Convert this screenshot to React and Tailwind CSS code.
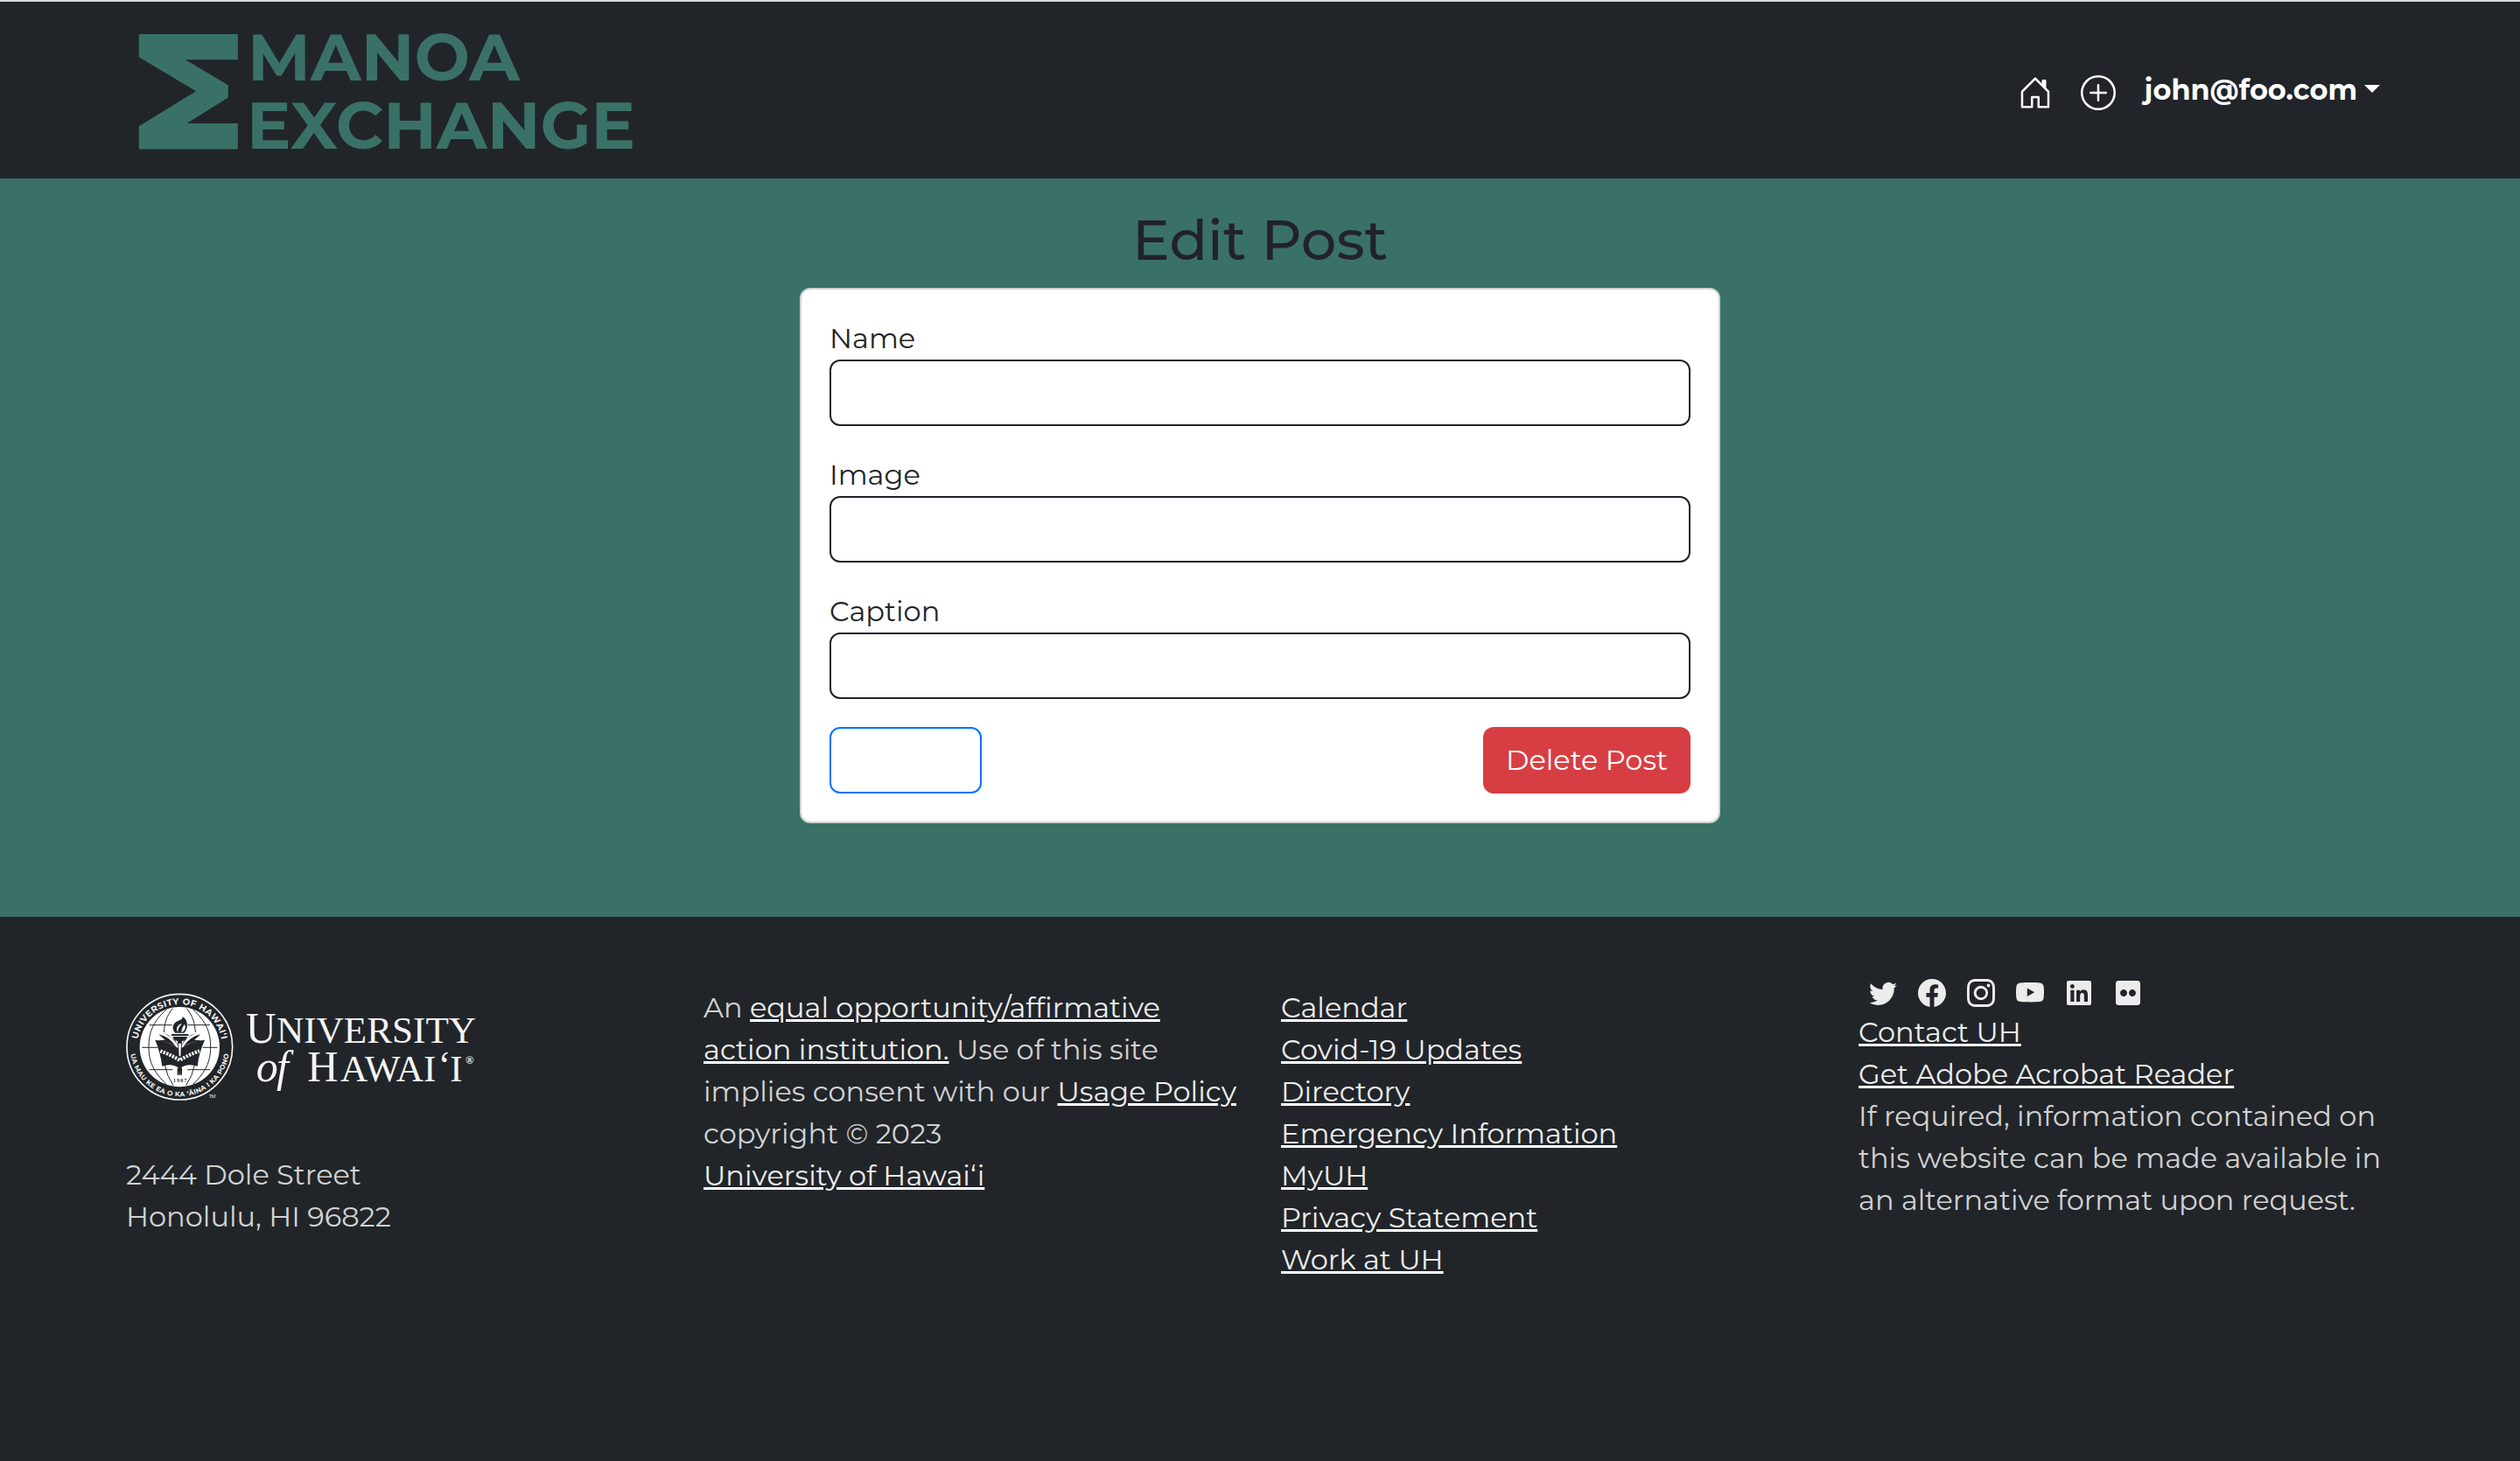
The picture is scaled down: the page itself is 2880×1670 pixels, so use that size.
import { BsFacebook, BsHouseDoor, BsInstagram, BsPlusCircle, BsTwitter, BsYoutube } from "react-icons/bs";
import { FaFlickr, FaLinkedin } from "react-icons/fa";

function BrandLogo() {
  return (
    <svg viewBox="158 16 590 174" className="h-[174px] w-[590px] fill-[#3a7167] font-['Montserrat','Inter',sans-serif] font-bold" aria-label="Manoa Exchange">
      <path d="M158.8 39H271.8V68.3H211.8L260.8 97.3V111.5L213.5 141H271.8V170.5H158.8V144.3L224 104.3L158.8 65.3Z" />
      <text x="283" y="92" fontSize="75.7" textLength="311" lengthAdjust="spacingAndGlyphs">MANOA</text>
      <text x="282" y="170" fontSize="75.7" textLength="444" lengthAdjust="spacingAndGlyphs">EXCHANGE</text>
    </svg>
  );
}

function UniversityLogo() {
  return (
    <svg viewBox="12 15 1212 378" className="h-[126px] w-[404px] fill-[#f4f4f4]" aria-label="University of Hawaiʻi">
      <defs>
        <path id="seal-top" d="M50 200A146 146 0 0 1 342 200" />
        <path id="seal-bottom" d="M26 200A170 170 0 0 0 366 200" />
      </defs>
      <circle cx="196" cy="200" r="181" fill="none" stroke="#f4f4f4" strokeWidth="5" />
      <circle cx="196" cy="200" r="137" fill="#ffffff" />
      <g className="font-['Montserrat','Inter',sans-serif] font-bold">
        <text fontSize="30">
          <textPath href="#seal-top" startOffset="26" textLength="407">UNIVERSITY OF HAWAIʻI</textPath>
        </text>
        <text fontSize="23">
          <textPath href="#seal-bottom" startOffset="25" textLength="484">UA MAU KE EA O KA ʻĀINA I KA PONO</textPath>
        </text>
      </g>
      <g fill="none" stroke="#212529" strokeWidth="3">
        <path d="M92 125H170M224 125H300M67 202H120M275 202H325M92 278H172M222 278H300" />
        <path d="M150 72C104 115 90 150 90 200S106 285 150 328M242 72C288 115 302 150 302 200S286 285 242 328" />
        <path d="M172 68C150 95 144 120 142 150M220 68C242 95 248 120 250 150M145 262Q152 300 174 332M247 262Q240 300 218 332" />
      </g>
      <g fill="#212529">
        <path d="M112 176Q160 180 196 208Q232 180 282 176Q262 220 257 266Q222 254 196 274Q170 254 136 266Q130 220 112 176Z" />
        <path d="M124 157Q160 164 184 200Q160 184 120 178L146 176ZM268 157Q232 164 208 200Q232 184 272 178L246 176Z" />
        <path d="M142 152Q170 162 190 196L180 176ZM250 152Q222 162 202 196L212 176Z" />
        <path d="M168 156H226V162H168ZM172 165H222Q218 179 204 180H190Q176 179 172 165Z" />
        <path d="M181 152C164 134 176 114 192 110C202 107 207 102 206 96C226 108 226 136 212 152Z" />
        <path d="M189 180H204L200 296H193Z" />
      </g>
      <path d="M190 149C180 138 190 122 204 120C196 130 190 136 190 149ZM202 151C202 138 208 128 213 122C218 134 214 144 202 151Z" fill="#ffffff" />
      <path d="M192 188H201L199 232H194Z" fill="#ffffff" />
      <path d="M130 214Q164 226 196 246Q228 226 264 214" fill="none" stroke="#ffffff" strokeWidth="12" strokeDasharray="7 4" />
      <path d="M188 270L196 278L204 270V296H200V284L196 280L192 284V296H188Z" fill="#212529" />
      <g className="font-['Liberation_Serif',serif]">
        <text x="174" y="320" fontSize="17" fontWeight="700" fill="#212529" textLength="46">1907</text>
        <text x="296" y="376" fontSize="17" textLength="23">TM</text>
        <text x="423" y="187" fontSize="152" textLength="104" lengthAdjust="spacingAndGlyphs">U</text>
        <text x="528" y="187" fontSize="129" textLength="684" lengthAdjust="spacingAndGlyphs">NIVERSITY</text>
        <text x="458" y="318" fontSize="150" fontStyle="italic" textLength="112">of</text>
        <text x="634" y="318" fontSize="152" textLength="106" lengthAdjust="spacingAndGlyphs">H</text>
        <text x="747" y="318" fontSize="129" textLength="328" lengthAdjust="spacingAndGlyphs">AWAI</text>
        <text x="1082" y="305" fontSize="130">ʻ</text>
        <text x="1123" y="318" fontSize="129">I</text>
        <text x="1176" y="257" fontSize="38" fontWeight="700">®</text>
      </g>
    </svg>
  );
}

function Link({ children }) {
  return (
    <a href="#" className="text-[#ededed] underline decoration-white decoration-[3px] underline-offset-[2px]">
      {children}
    </a>
  );
}

function Header() {
  return (
    <header className="flex h-[204px] items-center justify-between border-t-2 border-[#d5d9dc] bg-[#212529] pr-[160px] pl-[158px] text-white">
      <BrandLogo />
      <nav className="flex items-center">
        <BsHouseDoor className="mt-1.5 mr-8 size-10" />
        <BsPlusCircle className="mt-1.5 mr-[33px] size-10" />
        <span className="leading-[48px] font-bold">john@foo.com</span>
        <span className="mb-[3px] ml-[8px] h-0 w-0 border-x-[9px] border-t-[9px] border-x-transparent border-t-white" />
      </nav>
    </header>
  );
}

function Field({ label }) {
  return (
    <label className="mb-8 block">
      <span className="block leading-[48px]">{label}</span>
      <input className="block h-[76px] w-full rounded-xl border-2 border-[#22212e] bg-white px-6 outline-none" />
    </label>
  );
}

function EditPost() {
  return (
    <main className="flex h-[844px] flex-col items-center bg-[#3a7167] pt-8">
      <h1 className="mb-4 text-[64px] leading-[77px] font-medium text-[#22212e]">Edit Post</h1>
      <form className="w-[1052px] rounded-xl border-2 border-[#d2d2d2] bg-white p-8 text-[#212529]">
        <Field label="Name" />
        <Field label="Image" />
        <Field label="Caption" />
        <div className="flex justify-between">
          <button type="button" aria-label="Submit" className="h-[76px] w-[174px] rounded-xl border-2 border-[#0073ff] bg-white" />
          <button type="button" className="h-[76px] w-[237px] rounded-xl bg-[#d73e43] text-white">Delete Post</button>
        </div>
      </form>
    </main>
  );
}

function Footer() {
  return (
    <footer className="grid h-[622px] grid-cols-[660px_660px_660px_660px] items-start bg-[#212529] pl-[144px] leading-[48px] whitespace-nowrap text-[#d1d2d3]">
      <div className="pt-[87px]">
        <UniversityLogo />
        <address className="pt-[58px] not-italic">
          <div>2444 Dole Street</div>
          <div>Honolulu, HI 96822</div>
        </address>
      </div>
      <div className="pt-20">
        <p className="w-[612px] whitespace-normal">
          An <Link>equal opportunity/affirmative action institution.</Link> Use of this site implies consent with our <Link>Usage Policy</Link>
        </p>
        <p>copyright © 2023</p>
        <p><Link>University of Hawaiʻi</Link></p>
      </div>
      <div className="pt-20">
        <div><Link>Calendar</Link></div>
        <div><Link>Covid-19 Updates</Link></div>
        <div><Link>Directory</Link></div>
        <div><Link>Emergency Information</Link></div>
        <div><Link>MyUH</Link></div>
        <div><Link>Privacy Statement</Link></div>
        <div><Link>Work at UH</Link></div>
      </div>
      <div className="pt-[71px]">
        <div className="mb-[5px] flex gap-6 pl-3 text-[#ececec]">
          <BsTwitter />
          <BsFacebook />
          <BsInstagram />
          <BsYoutube />
          <FaLinkedin />
          <FaFlickr />
        </div>
        <div><Link>Contact UH</Link></div>
        <div><Link>Get Adobe Acrobat Reader</Link></div>
        <p className="w-[612px] whitespace-normal">
          If required, information contained on this website can be made available in an alternative format upon request.
        </p>
      </div>
    </footer>
  );
}

export default function App() {
  return (
    <div className="min-h-[1670px] w-[2880px] overflow-hidden bg-[#212529] font-['Montserrat','Inter',sans-serif] text-[32px]">
      <Header />
      <EditPost />
      <Footer />
    </div>
  );
}
